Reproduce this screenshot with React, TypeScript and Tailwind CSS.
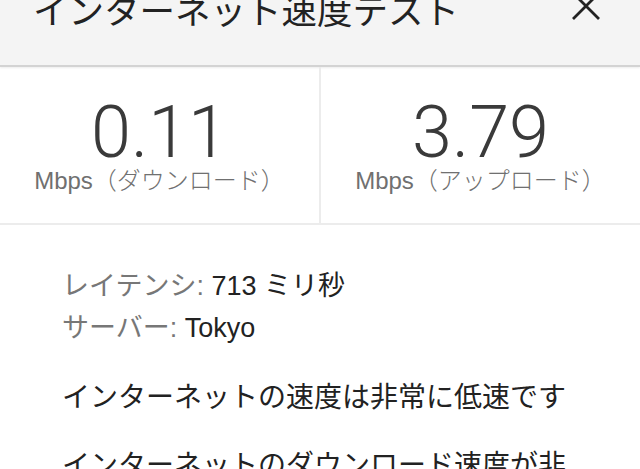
const jp = '"Noto Sans CJK JP", sans-serif';
const mixed = '"Liberation Sans", "Noto Sans CJK JP", sans-serif';

function Stat({ value, label }: { value: string; label: string }) {
  return (
    <div className="flex-1 flex flex-col items-center pt-[30px]">
      <div
        className="text-[72px] leading-none font-light text-[#3a3a3a]"
        style={{ fontFamily: "Roboto, sans-serif" }}
      >
        {value}
      </div>
      <div
        className="text-[24px] leading-[24px] h-[24px] text-[#707070] font-light whitespace-nowrap"
        style={{ fontFamily: mixed }}
      >
        {label}
      </div>
    </div>
  );
}

export default function App() {
  return (
    <div className="w-[640px] h-[469px] overflow-hidden bg-white relative">
      <header className="h-[67px] bg-[#f4f4f4] border-b-2 border-[#d3d3d3] flex items-start justify-between pl-[33px] pr-[40px] shadow-[0_1px_2px_rgba(0,0,0,0.08)]">
        <h1
          className="mt-[-9px] text-[35.5px] leading-none text-[#222] font-normal whitespace-nowrap"
          style={{ fontFamily: jp }}
        >
          インターネット速度テスト
        </h1>
        <svg width="28" height="28" viewBox="0 0 28 28" className="mt-[-8px]">
          <path d="M1 1 L27 27 M27 1 L1 27" stroke="#222" strokeWidth="2.8" />
        </svg>
      </header>

      <div className="flex h-[158px] border-b-2 border-[#ececec]">
        <Stat value="0.11" label="Mbps（ダウンロード）" />
        <div className="w-[2px] bg-[#ececec]" />
        <Stat value="3.79" label="Mbps（アップロード）" />
      </div>

      <div className="pl-[62px] pt-[40px] text-[#222]" style={{ fontFamily: mixed }}>
        <div className="text-[27px] leading-[42px] h-[42px] whitespace-nowrap">
          <span className="text-[#777]">レイテンシ:</span> 713 ミリ秒
        </div>
        <div className="text-[27px] leading-[42px] h-[42px] whitespace-nowrap">
          <span className="text-[#777]">サーバー:</span> Tokyo
        </div>
        <p className="mt-[25px] text-[28px] leading-[42px] whitespace-nowrap" style={{ fontFamily: jp }}>
          インターネットの速度は非常に低速です
        </p>
        <p className="mt-[26px] text-[28px] leading-[42px] whitespace-nowrap" style={{ fontFamily: jp }}>
          インターネットのダウンロード速度が非
        </p>
      </div>
    </div>
  );
}
